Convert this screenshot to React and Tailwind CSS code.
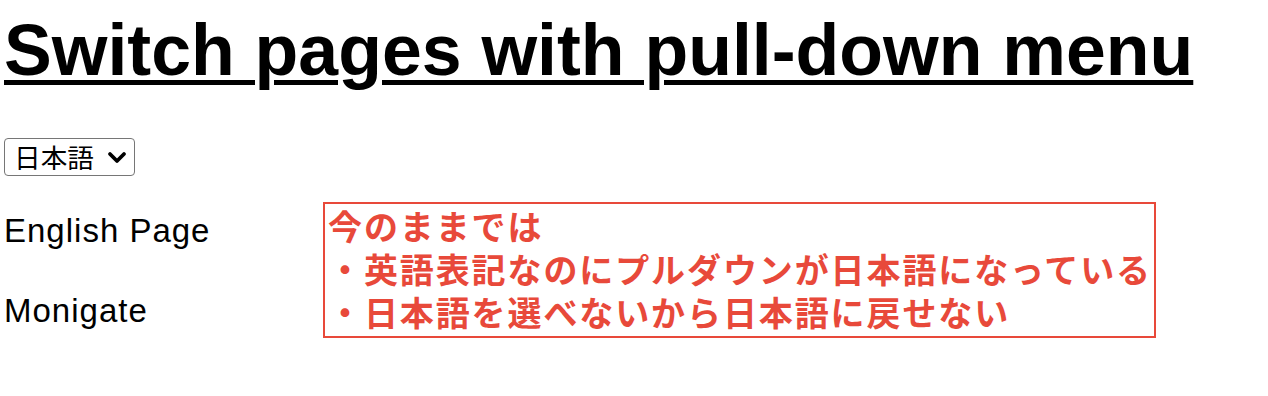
export default function App() {
  return (
    <div className="min-h-screen bg-white pl-[4px] pt-[14px] text-black font-['Liberation_Sans','Noto_Sans_CJK_JP',sans-serif]">
      <h1 className="text-[71.6px] font-bold leading-[72px] underline decoration-[5px] underline-offset-[5px]">
        Switch pages with pull-down menu
      </h1>

      <div className="relative mt-[52px] h-[38px] w-[131px]">
        <select
          defaultValue="ja"
          className="h-full w-full appearance-none rounded-[4px] border border-[#767676] bg-white pl-[9px] text-[26.67px] leading-none font-['Noto_Sans_CJK_JP',sans-serif] outline-none"
        >
          <option value="ja">日本語</option>
          <option value="en">English</option>
        </select>
        <svg
          className="pointer-events-none absolute right-[8px] top-[13px]"
          width="20"
          height="13"
          viewBox="0 0 20 13"
          fill="none"
        >
          <path d="M3 3 L10 10 L17 3" stroke="black" strokeWidth="3.8" strokeLinecap="round" strokeLinejoin="round" />
        </svg>
      </div>

      <div className="mt-[26px] flex items-start">
        <div className="w-[319px] shrink-0 pt-[9px] text-[33px] leading-[40px] tracking-[1px]">
          <p>English Page</p>
          <p className="mt-[40px]">Monigate</p>
        </div>
        <div className="w-[833px] shrink-0 border-2 border-[#e8493a] pb-[3px] pl-[3px] text-[34px] font-bold leading-[43px] tracking-[1.9px] text-[#e8493a] font-['Noto_Sans_CJK_JP',sans-serif]">
          <p>今のままでは</p>
          <p>・英語表記なのにプルダウンが日本語になっている</p>
          <p>・日本語を選べないから日本語に戻せない</p>
        </div>
      </div>
    </div>
  )
}
